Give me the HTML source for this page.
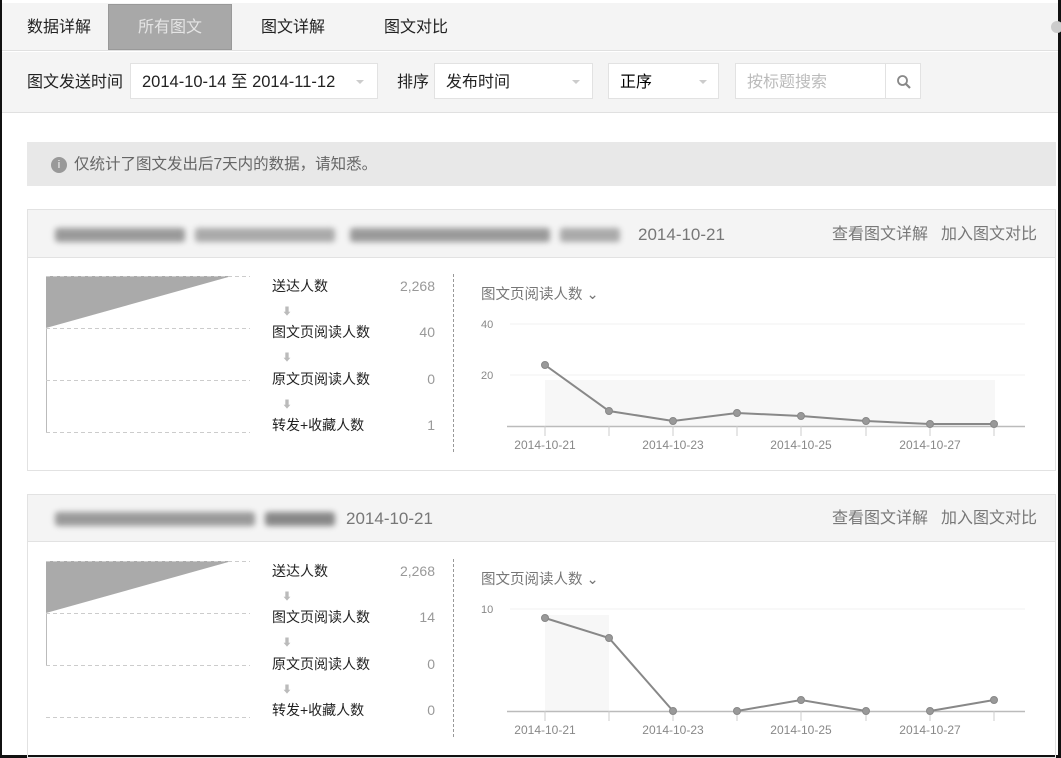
<!DOCTYPE html>
<html><head><meta charset="utf-8"><style>
*{margin:0;padding:0;box-sizing:border-box}
body{width:1061px;height:758px;background:#fff;position:relative;overflow:hidden;font-family:"Liberation Sans","Noto Sans CJK SC",sans-serif;color:#222}
.a{position:absolute}
.t{font-size:16px;line-height:18px;white-space:nowrap}
.box{position:absolute;background:#fff;border:1px solid #e2e2e2;height:36px;top:63px}
.blur{position:absolute;background:#9a9a9a;filter:blur(3px);height:14px;border-radius:3px}
</style></head><body>
<div class="a" style="left:0;top:0;width:2px;height:758px;background:#111"></div>
<div class="a" style="left:1058px;top:0;width:3px;height:758px;background:#111"></div>
<div class="a" style="left:0;top:755px;width:1061px;height:3px;background:#111"></div>
<!-- tab bar -->
<div class="a" style="left:2px;top:3px;width:1056px;height:48px;background:#f4f4f4;border-bottom:1px solid #e0e0e0"></div>
<div class="a" style="left:108px;top:4px;width:124px;height:46px;background:#a8a8a8;border:1px solid #999"></div>
<div class="a t" style="left:27px;top:19px">数据详解</div>
<div class="a t" style="left:138px;top:19px;color:#e4e4e4">所有图文</div>
<div class="a t" style="left:261px;top:19px">图文详解</div>
<div class="a t" style="left:384px;top:19px">图文对比</div>
<div class="a" style="left:1051px;top:21px;width:12px;height:12px;border-radius:50%;background:#ccc"></div>
<!-- toolbar -->
<div class="a" style="left:2px;top:52px;width:1056px;height:61px;background:#f4f4f4;border-bottom:1px solid #e0e0e0"></div>
<div class="a t" style="left:27px;top:74px">图文发送时间</div>
<div class="box" style="left:130px;width:248px"></div>
<div class="a" style="left:142px;top:72px;font-size:16.5px;line-height:21px;white-space:nowrap">2014-10-14 至 2014-11-12</div>
<div class="a" style="left:356px;top:80px;border:4px solid transparent;border-top-color:#ccc"></div>
<div class="a t" style="left:397px;top:74px">排序</div>
<div class="box" style="left:434px;width:159px"></div>
<div class="a t" style="left:446px;top:74px">发布时间</div>
<div class="a" style="left:572px;top:80px;border:4px solid transparent;border-top-color:#ccc"></div>
<div class="box" style="left:608px;width:111px"></div>
<div class="a t" style="left:620px;top:74px;color:#000">正序</div>
<div class="a" style="left:699px;top:80px;border:4px solid transparent;border-top-color:#ccc"></div>
<div class="box" style="left:735px;width:186px"></div>
<div class="a" style="left:885px;top:64px;width:1px;height:34px;background:#e2e2e2"></div>
<div class="a t" style="left:747px;top:74px;color:#bbb">按标题搜索</div>
<svg class="a" style="left:896px;top:74px" width="16" height="16"><circle cx="6.5" cy="6.5" r="4.5" fill="none" stroke="#888" stroke-width="1.8"/><line x1="10" y1="10" x2="14" y2="14" stroke="#888" stroke-width="2.2"/></svg>
<!-- notice -->
<div class="a" style="left:27px;top:142px;width:1029px;height:44px;background:#e8e8e8"></div>
<div class="a" style="left:51px;top:157px;width:16px;height:16px;border-radius:50%;background:#999;color:#fff;font-size:11px;line-height:16px;text-align:center">i</div>
<div class="a t" style="left:74px;top:156px;color:#666;font-size:15.5px">仅统计了图文发出后7天内的数据，请知悉。</div>

<!-- card 1 -->
<div class="a" style="left:27px;top:209px;width:1029px;height:262px;border:1px solid #e2e2e2"></div>
<div class="a" style="left:28px;top:210px;width:1027px;height:48px;background:#f4f4f4;border-bottom:1px solid #e2e2e2"></div>
<div class="blur" style="left:55px;top:228px;width:130px"></div>
<div class="blur" style="left:195px;top:228px;width:140px;background:#aaa"></div>
<div class="blur" style="left:350px;top:228px;width:200px"></div>
<div class="blur" style="left:560px;top:228px;width:60px;background:#aaa"></div>
<div class="a" style="left:638px;top:225px;font-size:17px;color:#777;white-space:nowrap">2014-10-21</div>
<div class="a t" style="left:832px;top:226px;color:#777">查看图文详解</div>
<div class="a t" style="left:941px;top:226px;color:#777">加入图文对比</div>

<!-- card 2 -->
<div class="a" style="left:27px;top:494px;width:1029px;height:264px;border:1px solid #e2e2e2"></div>
<div class="a" style="left:28px;top:495px;width:1027px;height:47px;background:#f4f4f4;border-bottom:1px solid #e2e2e2"></div>
<div class="blur" style="left:55px;top:512px;width:200px"></div>
<div class="blur" style="left:265px;top:512px;width:70px;background:#888"></div>
<div class="a" style="left:346px;top:509px;font-size:17px;color:#777;white-space:nowrap">2014-10-21</div>
<div class="a t" style="left:832px;top:510px;color:#777">查看图文详解</div>
<div class="a t" style="left:941px;top:510px;color:#777">加入图文对比</div>

<svg class="a" style="left:0;top:0" width="1061" height="758" font-family="Liberation Sans, Noto Sans CJK SC, sans-serif">
<g id="c1">
<polygon points="46,276 232,276 46,328" fill="#aaa"/>
<line x1="46.5" y1="328" x2="46.5" y2="432" stroke="#bbb"/>
<g stroke="#ccc" stroke-dasharray="4,3"><line x1="46" y1="276.5" x2="250" y2="276.5"/><line x1="46" y1="328.5" x2="250" y2="328.5"/><line x1="46" y1="380.5" x2="250" y2="380.5"/><line x1="46" y1="432.5" x2="250" y2="432.5"/></g>
<g font-size="14" fill="#222"><text x="272" y="291">送达人数</text><text x="272" y="337">图文页阅读人数</text><text x="272" y="384">原文页阅读人数</text><text x="272" y="430">转发+收藏人数</text></g>
<g font-size="14" fill="#999" text-anchor="end"><text x="435" y="291">2,268</text><text x="435" y="337">40</text><text x="435" y="384">0</text><text x="435" y="430">1</text></g>
<g fill="#bbb" font-size="10" text-anchor="middle"><text x="287" y="315">⬇</text><text x="287" y="361">⬇</text><text x="287" y="408">⬇</text></g>
<line x1="453.5" y1="274" x2="453.5" y2="452" stroke="#999" stroke-dasharray="3,2"/>
<text x="481" y="299" font-size="14.5" fill="#777">图文页阅读人数 ⌄</text>
<g font-size="11" fill="#888"><text x="481" y="328">40</text><text x="481" y="379">20</text></g>
<line x1="510" y1="324" x2="1025" y2="324" stroke="#f2f2f2"/><line x1="510" y1="375" x2="1025" y2="375" stroke="#f2f2f2"/>
<rect x="545" y="380" width="450" height="46" fill="#f7f7f7"/>
<line x1="507" y1="426.5" x2="1025" y2="426.5" stroke="#bbb" stroke-width="1.5"/>
<g stroke="#ccc"><line x1="545" y1="426" x2="545" y2="436"/><line x1="609" y1="426" x2="609" y2="436"/><line x1="673" y1="426" x2="673" y2="436"/><line x1="737" y1="426" x2="737" y2="436"/><line x1="801" y1="426" x2="801" y2="436"/><line x1="866" y1="426" x2="866" y2="436"/><line x1="930" y1="426" x2="930" y2="436"/><line x1="994" y1="426" x2="994" y2="436"/></g>
<g font-size="12" fill="#888" text-anchor="middle"><text x="545" y="449">2014-10-21</text><text x="673" y="449">2014-10-23</text><text x="801" y="449">2014-10-25</text><text x="930" y="449">2014-10-27</text></g>
<polyline points="545,365 609,411 673,421 737,413 801,416 866,421 930,424 994,424" fill="none" stroke="#888" stroke-width="2"/>
<g fill="#999" stroke="#888"><circle cx="545" cy="365" r="3.5"/><circle cx="609" cy="411" r="3.5"/><circle cx="673" cy="421" r="3.5"/><circle cx="737" cy="413" r="3.5"/><circle cx="801" cy="416" r="3.5"/><circle cx="866" cy="421" r="3.5"/><circle cx="930" cy="424" r="3.5"/><circle cx="994" cy="424" r="3.5"/></g>
</g>
<g transform="translate(0,285)">
<polygon points="46,276 232,276 46,328" fill="#aaa"/>
<line x1="46.5" y1="328" x2="46.5" y2="380" stroke="#bbb"/>
<g stroke="#ccc" stroke-dasharray="4,3"><line x1="46" y1="276.5" x2="250" y2="276.5"/><line x1="46" y1="328.5" x2="250" y2="328.5"/><line x1="46" y1="380.5" x2="250" y2="380.5"/><line x1="46" y1="432.5" x2="250" y2="432.5"/></g>
<g font-size="14" fill="#222"><text x="272" y="291">送达人数</text><text x="272" y="337">图文页阅读人数</text><text x="272" y="384">原文页阅读人数</text><text x="272" y="430">转发+收藏人数</text></g>
<g font-size="14" fill="#999" text-anchor="end"><text x="435" y="291">2,268</text><text x="435" y="337">14</text><text x="435" y="384">0</text><text x="435" y="430">0</text></g>
<g fill="#bbb" font-size="10" text-anchor="middle"><text x="287" y="315">⬇</text><text x="287" y="361">⬇</text><text x="287" y="408">⬇</text></g>
<line x1="453.5" y1="274" x2="453.5" y2="452" stroke="#999" stroke-dasharray="3,2"/>
<text x="481" y="299" font-size="14.5" fill="#777">图文页阅读人数 ⌄</text>
<g font-size="11" fill="#888"><text x="481" y="328">10</text></g>
<line x1="510" y1="324" x2="1025" y2="324" stroke="#f2f2f2"/>
<rect x="545" y="330" width="64" height="96" fill="#f7f7f7"/>
<line x1="507" y1="426.5" x2="1025" y2="426.5" stroke="#bbb" stroke-width="1.5"/>
<g stroke="#ccc"><line x1="545" y1="426" x2="545" y2="436"/><line x1="609" y1="426" x2="609" y2="436"/><line x1="673" y1="426" x2="673" y2="436"/><line x1="737" y1="426" x2="737" y2="436"/><line x1="801" y1="426" x2="801" y2="436"/><line x1="866" y1="426" x2="866" y2="436"/><line x1="930" y1="426" x2="930" y2="436"/><line x1="994" y1="426" x2="994" y2="436"/></g>
<g font-size="12" fill="#888" text-anchor="middle"><text x="545" y="449">2014-10-21</text><text x="673" y="449">2014-10-23</text><text x="801" y="449">2014-10-25</text><text x="930" y="449">2014-10-27</text></g>
<polyline points="545,333 609,353 673,426" fill="none" stroke="#888" stroke-width="2"/>
<polyline points="737,426 801,415 866,426" fill="none" stroke="#888" stroke-width="2"/>
<polyline points="930,426 994,415" fill="none" stroke="#888" stroke-width="2"/>
<g fill="#999" stroke="#888"><circle cx="545" cy="333" r="3.5"/><circle cx="609" cy="353" r="3.5"/><circle cx="673" cy="426" r="3.5"/><circle cx="737" cy="426" r="3.5"/><circle cx="801" cy="415" r="3.5"/><circle cx="866" cy="426" r="3.5"/><circle cx="930" cy="426" r="3.5"/><circle cx="994" cy="415" r="3.5"/></g>
</g>
</svg>
</body></html>
